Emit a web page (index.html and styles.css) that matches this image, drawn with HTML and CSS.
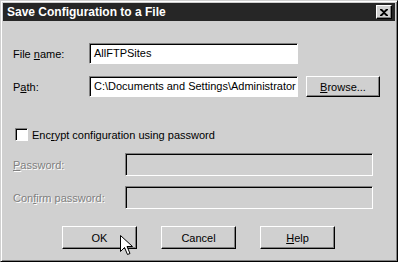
FILE: index.html
```html
<!DOCTYPE html>
<html lang="en">

<head>
    <meta charset="UTF-8">
    <title>Save Configuration to a File</title>
    <link rel="stylesheet" href="styles.css">
</head>

<body>
    <div class="window">
        <div class="titlebar">
            <span class="title">Save Configuration to a File</span>
            <div class="close_btn">
                <svg width="8" height="7" viewBox="0 0 8 7">
                    <path d="M0 0h2l2 2 2-2h2v1l-3 2.5 3 2.5v1h-2l-2-2-2 2h-2v-1l3-2.5-3-2.5z" fill="#000"/>
                </svg>
            </div>
        </div>

        <div class="content">
            <div class="row first">
                <label class="label">File <u>n</u>ame:</label>
                <div class="field wide">AllFTPSites</div>
            </div>
            <div class="row second">
                <label class="label">P<u>a</u>th:</label>
                <div class="field wide">C:\Documents and Settings\Administrator</div>
                <button class="btn browse"><u>B</u>rowse...</button>
            </div>

            <div class="check_row">
                <span class="checkbox"></span>
                <span>Enc<u>r</u>ypt configuration using password</span>
            </div>

            <div class="row pass">
                <label class="label long disabled"><u>P</u>assword:</label>
                <div class="field long_field off"></div>
            </div>
            <div class="row confirm">
                <label class="label long disabled">Con<u>f</u>irm password:</label>
                <div class="field long_field off"></div>
            </div>

            <div class="buttons">
                <button class="btn action ok">OK
                    <svg class="cursor" width="13" height="21" viewBox="0 0 13 21">
                        <path d="M0.5 0.5v16l4-4 3 7 2.5-1-3-7h5.5z" fill="#fff" stroke="#000" stroke-width="1"/>
                    </svg>
                </button>
                <button class="btn action">Cancel</button>
                <button class="btn action"><u>H</u>elp</button>
            </div>
        </div>
    </div>
</body>

</html>
```

FILE: styles.css
```css
* {
    margin: 0;
    padding: 0;
    box-sizing: border-box;
}

body {
    font-family: "Liberation Sans", Arial, sans-serif;
    font-size: 11px;
    color: black;
    background: rgb(208, 208, 208);
}

.window {
    width: 398px;
    height: 262px;
    background: rgb(208, 208, 208);
    border-top: 1px solid rgb(208, 208, 208);
    border-left: 1px solid rgb(208, 208, 208);
    border-right: 1px solid black;
    border-bottom: 1px solid black;
    box-shadow: inset 1px 1px white, inset -1px -1px rgb(128, 128, 128);
    padding: 2px;
}

.titlebar {
    height: 18px;
    background: rgb(38, 38, 38);
    color: white;
    display: flex;
    align-items: center;
    justify-content: space-between;
    padding: 0 3px 0 4px;
}

.title {
    font-weight: bold;
    font-size: 12px;
}

.close_btn {
    width: 16px;
    height: 14px;
    background: rgb(208, 208, 208);
    border-top: 1px solid white;
    border-left: 1px solid white;
    border-right: 1px solid black;
    border-bottom: 1px solid black;
    box-shadow: inset -1px -1px rgb(128, 128, 128);
    display: flex;
    align-items: center;
    justify-content: center;
}

.content {
    padding: 0 0 0 10px;
}

.row {
    display: flex;
    align-items: center;
}

.row.first {
    margin-top: 22px;
}

.row.second {
    margin-top: 12px;
}

.row.pass {
    margin-top: 12px;
}

.row.confirm {
    margin-top: 10px;
}

.label {
    width: 76px;
}

.label.long {
    width: 112px;
}

.disabled {
    color: rgb(128, 128, 128);
    text-shadow: 1px 1px white;
}

.field {
    height: 21px;
    background: white;
    border-top: 1px solid rgb(128, 128, 128);
    border-left: 1px solid rgb(128, 128, 128);
    border-right: 1px solid white;
    border-bottom: 1px solid white;
    box-shadow: inset 1px 1px black;
    padding: 3px 0 0 4px;
    white-space: nowrap;
    overflow: hidden;
}

.field.wide {
    width: 209px;
}

.field.long_field {
    width: 248px;
    height: 23px;
}

.field.off {
    background: rgb(208, 208, 208);
}

.btn {
    font-family: inherit;
    font-size: 11px;
    color: black;
    background: rgb(208, 208, 208);
    border-top: 1px solid white;
    border-left: 1px solid white;
    border-right: 1px solid black;
    border-bottom: 1px solid black;
    box-shadow: inset -1px -1px rgb(128, 128, 128);
}

.browse {
    width: 74px;
    height: 21px;
    margin-left: 8px;
}

.check_row {
    display: flex;
    align-items: center;
    gap: 4px;
    margin-top: 31px;
    padding-left: 2px;
}

.checkbox {
    width: 13px;
    height: 13px;
    background: white;
    border-top: 1px solid rgb(128, 128, 128);
    border-left: 1px solid rgb(128, 128, 128);
    border-right: 1px solid white;
    border-bottom: 1px solid white;
    box-shadow: inset 1px 1px black;
}

.buttons {
    display: flex;
    gap: 24px;
    margin-top: 17px;
    padding-left: 49px;
}

.action {
    width: 75px;
    height: 23px;
}

.ok {
    position: relative;
}

.cursor {
    position: absolute;
    left: 57px;
    top: 8px;
}
```
